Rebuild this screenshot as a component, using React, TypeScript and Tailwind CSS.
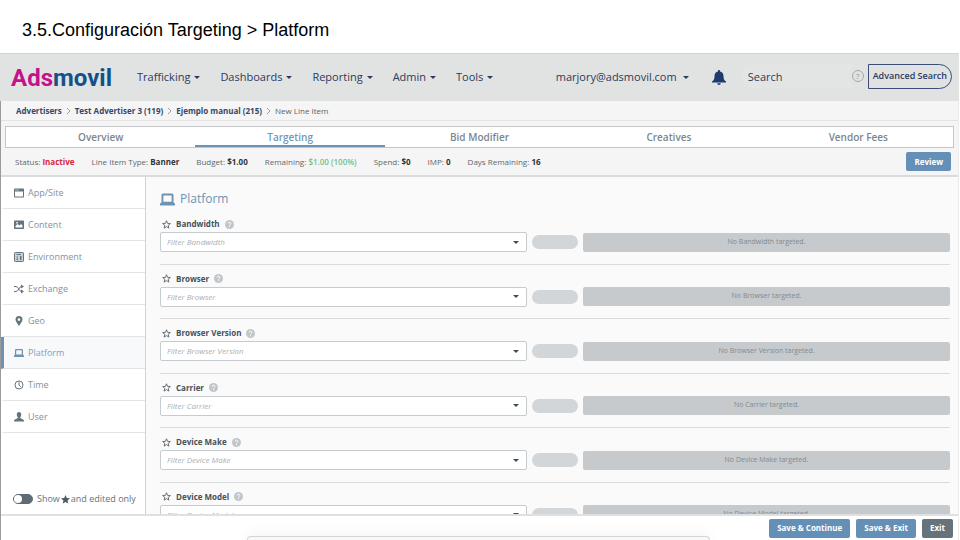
import type { ReactNode } from "react";

const navItems = ["Trafficking", "Dashboards", "Reporting", "Admin", "Tools"];
const tabs = ["Overview", "Targeting", "Bid Modifier", "Creatives", "Vendor Fees"];
const filters = ["Bandwidth", "Browser", "Browser Version", "Carrier", "Device Make", "Device Model"];

const facts = [
  { label: "Status:", value: "Inactive", tone: "font-bold text-[#d9263c]" },
  { label: "Line Item Type:", value: "Banner", tone: "font-bold text-[#2f353a]" },
  { label: "Budget:", value: "$1.00", tone: "font-bold text-[#2f353a]" },
  { label: "Remaining:", value: "$1.00 (100%)", tone: "font-semibold text-[#74c08a]" },
  { label: "Spend:", value: "$0", tone: "font-bold text-[#2f353a]" },
  { label: "IMP:", value: "0", tone: "font-bold text-[#2f353a]" },
  { label: "Days Remaining:", value: "16", tone: "font-bold text-[#2f353a]" },
];

function Svg({ size, children }: { size: number; children: ReactNode }) {
  return (
    <svg width={size} height={size} viewBox="0 0 20 20" fill="currentColor" aria-hidden="true" className="shrink-0">
      {children}
    </svg>
  );
}

function LaptopIcon({ size }: { size: number }) {
  return (
    <Svg size={size}>
      <path fillRule="evenodd" d="M4 2h12a2 2 0 0 1 2 2v9.500l2 2V18H0v-2.500l2-2V4a2 2 0 0 1 2-2zM4.500 4.500v8.500h11V4.500z" />
    </Svg>
  );
}

function Caret() {
  return (
    <svg width="6" height="3" viewBox="0 0 6 3" fill="currentColor" aria-hidden="true" className="shrink-0">
      <path d="M0 0h6L3 3z" />
    </svg>
  );
}

function HelpIcon() {
  return (
    <svg width="9" height="9" viewBox="0 0 18 18" aria-hidden="true" className="shrink-0">
      <circle cx="9" cy="9" r="9" fill="#c3c6c9" />
      <path d="M6.300 7a2.700 2.700 0 1 1 4 2.300c-1 .6-1.300 1-1.300 1.900" fill="none" stroke="#fafafa" strokeWidth="2" />
      <rect x="8" y="12.500" width="2" height="2" fill="#fafafa" />
    </svg>
  );
}

function StarOutline() {
  return (
    <svg width="9" height="9" viewBox="0 0 18 18" aria-hidden="true" className="shrink-0">
      <path d="M9 1.500l2.100 5.200 5.600.4-4.300 3.600 1.400 5.500L9 13.200l-4.800 3 1.400-5.500L1.300 7.100l5.600-.4z" fill="none" stroke="#4f5b64" strokeWidth="1.700" strokeLinejoin="round" />
    </svg>
  );
}

const sections: { name: string; icon: ReactNode }[] = [
  {
    name: "App/Site",
    icon: (
      <Svg size={10}>
        <path fillRule="evenodd" d="M1.500 1h17A1.500 1.500 0 0 1 20 2.500v15a1.500 1.500 0 0 1-1.500 1.500h-17A1.500 1.500 0 0 1 0 17.500v-15A1.500 1.500 0 0 1 1.500 1zM2 7v10h16V7zM3 3v2h2V3zm4 0v2h2V3z" />
      </Svg>
    ),
  },
  {
    name: "Content",
    icon: (
      <Svg size={10}>
        <path fillRule="evenodd" d="M1.500 1h17A1.500 1.500 0 0 1 20 2.500v14a1.500 1.500 0 0 1-1.500 1.500h-17A1.500 1.500 0 0 1 0 16.500v-14A1.500 1.500 0 0 1 1.500 1zM3 15h14v-4l-3-3-3 3-4-3-4 4zM4.500 4v3h3V4z" />
      </Svg>
    ),
  },
  {
    name: "Environment",
    icon: (
      <Svg size={10}>
        <rect x="1" y="1" width="18" height="18" rx="1.500" fill="#c9d1d6" stroke="currentColor" strokeWidth="2" />
        <path d="M5 4h9v2H5zM5 9h3v2H5zM5 13h3v3H5zM12 8h3v8h-3z" />
      </Svg>
    ),
  },
  {
    name: "Exchange",
    icon: (
      <Svg size={10}>
        <path d="M0 5h4c5 0 6 10 11 10M0 15h4c5 0 6-10 11-10" fill="none" stroke="currentColor" strokeWidth="2" />
        <path d="M14 1l6 4-6 4zM14 11l6 4-6 4z" />
      </Svg>
    ),
  },
  {
    name: "Geo",
    icon: (
      <Svg size={10}>
        <path fillRule="evenodd" d="M10 0a7 7 0 0 1 7 7c0 4-4 8-7 13C7 15 3 11 3 7a7 7 0 0 1 7-7zm0 4.500a2.700 2.700 0 1 0 0 5.400 2.700 2.700 0 0 0 0-5.400z" />
      </Svg>
    ),
  },
  { name: "Platform", icon: <LaptopIcon size={10} /> },
  {
    name: "Time",
    icon: (
      <Svg size={10}>
        <circle cx="10" cy="10" r="8" fill="none" stroke="currentColor" strokeWidth="2" />
        <path d="M10 4.500V10l3.500 3.500" fill="none" stroke="currentColor" strokeWidth="2" />
      </Svg>
    ),
  },
  {
    name: "User",
    icon: (
      <Svg size={10}>
        <path d="M10 0c3 0 4.500 2 4.500 5S13 10.500 12 11.500c0 2 8 2 8 6.500v1H0v-1c0-4.500 8-4.500 8-6.500C7 10.500 5.500 8 5.500 5S7 0 10 0z" />
      </Svg>
    ),
  },
];

function TopBar() {
  return (
    <header className="flex h-12 shrink-0 items-center border-t border-[#d3d5d5] bg-[#e1e3e3] pr-[7px] pl-[11px] text-[11px] text-[#2c3a5c]">
      <a href="#home" className="w-[126px] font-['Liberation_Sans_Narrow',Roboto,sans-serif] text-[24px] leading-8 font-bold text-[#14518a]">
        <span className="text-[#c4128d]">Ads</span>movil
      </a>
      <nav className="flex gap-5">
        {navItems.map((item) => (
          <button key={item} className="flex items-center gap-1">
            {item}
            <Caret />
          </button>
        ))}
      </nav>
      <button className="ml-auto flex items-center gap-1.5">
        marjory@adsmovil.com
        <Caret />
      </button>
      <button aria-label="Notifications" className="ml-[23px] text-[#1f3a6e]">
        <svg width="14" height="15" viewBox="0 0 28 30" fill="currentColor" aria-hidden="true">
          <path d="M14 0c1.200 0 2 .8 2 2v1c4.500 1 7 4.500 7 9 0 7 2 9 5 11v2H0v-2c3-2 5-4 5-11 0-4.500 2.500-8 7-9V2c0-1.200.8-2 2-2zM10.500 26.500h7c0 2-1.500 3.500-3.500 3.500s-3.500-1.500-3.500-3.500z" />
        </svg>
      </button>
      <form role="search" className="ml-[15px] flex items-center pb-[3px]">
        <input
          aria-label="Search"
          placeholder="Search"
          className="h-6 w-[111px] rounded-l-full bg-[#e3e5e5] pl-[7px] outline-none placeholder:text-[#2c3a5c]"
        />
        <button type="button" aria-label="Search help" className="mr-1 flex size-3 items-center justify-center rounded-full border border-[#a4a8ab] text-[8px] leading-none text-[#8d9296]">
          ?
        </button>
        <button type="button" className="h-[25px] rounded-r-full border border-[#3b4d78] px-1 text-[9px] font-semibold whitespace-nowrap">
          Advanced Search
        </button>
      </form>
    </header>
  );
}

function Breadcrumbs() {
  return (
    <nav aria-label="Breadcrumb" className="flex h-5 shrink-0 items-center gap-[5px] border-b border-[#e4e4e4] bg-[#f5f5f5] pl-[15px] text-[8px] font-bold text-[#33486b]">
      {["Advertisers", "Test Advertiser 3 (119)", "Ejemplo manual (215)"].map((crumb) => (
        <span key={crumb} className="flex items-center gap-[5px]">
          <a href="#crumb">{crumb}</a>
          <svg width="3" height="6" viewBox="0 0 3 6" fill="none" stroke="#9aa0a6" aria-hidden="true">
            <path d="M0 0l3 3-3 3" />
          </svg>
        </span>
      ))}
      <span className="font-medium text-[#5d6164]">New Line Item</span>
    </nav>
  );
}

function FilterRow({ name }: { name: string }) {
  const id = name.toLowerCase().replace(" ", "-");
  return (
    <div className="flex flex-col gap-[2px] border-b border-[#d9dbdc] pt-2">
      <div className="flex h-3 items-center gap-[5px] pl-[2px] text-[8px] leading-3">
        <StarOutline />
        <label htmlFor={id} className="font-bold text-[#46515a]">
          {name}
        </label>
        <HelpIcon />
      </div>
      <div className="flex items-center gap-[5px]">
        <div className="relative flex-1">
          <select
            id={id}
            defaultValue=""
            className="block h-5 w-full appearance-none rounded-xs border border-[#c6cbcf] bg-white pl-1.5 text-[8px] text-[#a9afb4] italic outline-none"
          >
            <option value="">Filter {name}</option>
          </select>
          <span className="pointer-events-none absolute inset-y-0 right-2 flex items-center text-[#444b50]">
            <Caret />
          </span>
        </div>
        <div className="h-3.5 w-[46px] rounded-full bg-[#d3d6d9]" />
        <div className="flex h-[19px] flex-1 items-center justify-center rounded-xs bg-[#c6cacd] text-[7px] text-[#83898e]">No {name} targeted.</div>
      </div>
    </div>
  );
}

export default function App() {
  return (
    <div className="relative flex h-screen flex-col overflow-hidden bg-white font-['Open_Sans',sans-serif]">
      <h1 className="h-[53px] shrink-0 pt-[18px] pl-[22px] font-['Liberation_Sans',Arial,sans-serif] text-[18px] leading-6 text-black">
        3.5.Configuración Targeting &gt; Platform
      </h1>
      <div className="mr-px flex min-h-0 flex-1 flex-col">
        <TopBar />
        <div className="flex min-h-0 flex-1 flex-col border-r border-l border-r-[#ececec] border-l-[#9b9b9b] bg-[#f5f5f5]">
          <Breadcrumbs />
          <div role="tablist" className="mt-[5px] mr-1 ml-1 grid h-[22px] shrink-0 grid-cols-5 border border-[#c4c6c8] bg-white text-[10px] leading-4 font-semibold text-[#7b868e]">
            {tabs.map((tab) => (
              <button
                key={tab}
                role="tab"
                aria-selected={tab === "Targeting"}
                className="border-b-2 border-transparent pt-px aria-selected:border-[#6c93b3] aria-selected:text-[#6f9aba]"
              >
                {tab}
              </button>
            ))}
          </div>
          <div className="flex h-[29px] shrink-0 items-center gap-[17px] border-b-2 border-[#d9dbdc] pr-[7px] pl-[14px] text-[8px] text-[#5f676d]">
            {facts.map((fact) => (
              <span key={fact.label}>
                {fact.label} <span className={fact.tone}>{fact.value}</span>
              </span>
            ))}
            <button className="ml-auto h-[19px] rounded-xs bg-[#648fb6] px-2 text-[8px] font-bold text-white">Review</button>
          </div>
          <div className="flex min-h-0 flex-1">
            <aside className="flex w-[145px] shrink-0 flex-col border-r border-[#d0d3d5] bg-white">
              {sections.map(({ name, icon }) => (
                <a
                  key={name}
                  href={"#" + name}
                  aria-current={name === "Platform" ? "page" : undefined}
                  className="flex h-8 items-center gap-1 border-b border-l-3 border-b-[#e2e4e5] border-l-transparent pl-[10px] text-[9px] text-[#85909a] aria-[current=page]:border-l-[#6c93b3] aria-[current=page]:bg-[#f8f9fa] aria-[current=page]:text-[#7fa0bb]"
                >
                  <span className={name === "Platform" ? "text-[#6c93b3]" : "text-[#66747e]"}>{icon}</span>
                  {name}
                </a>
              ))}
              <label className="mt-auto mb-[9px] flex items-center gap-1 pl-3 text-[9px] leading-3 whitespace-nowrap text-[#66717a]">
                <input
                  type="checkbox"
                  className="h-[10px] w-5 shrink-0 appearance-none rounded-full border border-[#5e6c77] bg-[#5e6c77] before:block before:size-2 before:rounded-full before:bg-white checked:before:ml-[10px]"
                />
                <span className="flex items-center gap-px">
                  Show
                  <svg width="9" height="9" viewBox="0 0 18 18" fill="#4f5b64" aria-hidden="true">
                    <path d="M9 0l2.600 6 6.400.6-4.900 4.200 1.500 6.400L9 13.800l-5.600 3.400 1.500-6.400L0 6.600 6.400 6z" />
                  </svg>
                  and edited only
                </span>
              </label>
            </aside>
            <main className="min-w-0 flex-1 overflow-hidden bg-[#fafafa] pr-2 pl-[14px]">
              <h2 className="mt-3 flex h-5 items-center gap-[5px] text-[12px] text-[#6c93b3]">
                <LaptopIcon size={15} />
                Platform
              </h2>
              <div className="mt-px grid h-[327px] auto-rows-fr">
                {filters.map((name) => (
                  <FilterRow key={name} name={name} />
                ))}
              </div>
            </main>
          </div>
          <footer className="flex h-[26px] shrink-0 items-center justify-end gap-1.5 border-t-2 border-[#dde1e3] bg-white pr-[5px] text-[8px] font-bold text-white">
            <button className="h-[19px] rounded-xs bg-[#648fb6] px-2">Save &amp; Continue</button>
            <button className="h-[19px] rounded-xs bg-[#648fb6] px-2">Save &amp; Exit</button>
            <button className="h-[19px] rounded-xs bg-[#65737c] px-2">Exit</button>
          </footer>
        </div>
      </div>
      <div className="absolute bottom-0 left-[247px] h-1 w-[463px] rounded-t border border-b-0 border-[#d5d5d5] bg-[#f8f8f8] shadow-[0_0_14px_rgba(0,0,0,0.12)]" />
    </div>
  );
}
